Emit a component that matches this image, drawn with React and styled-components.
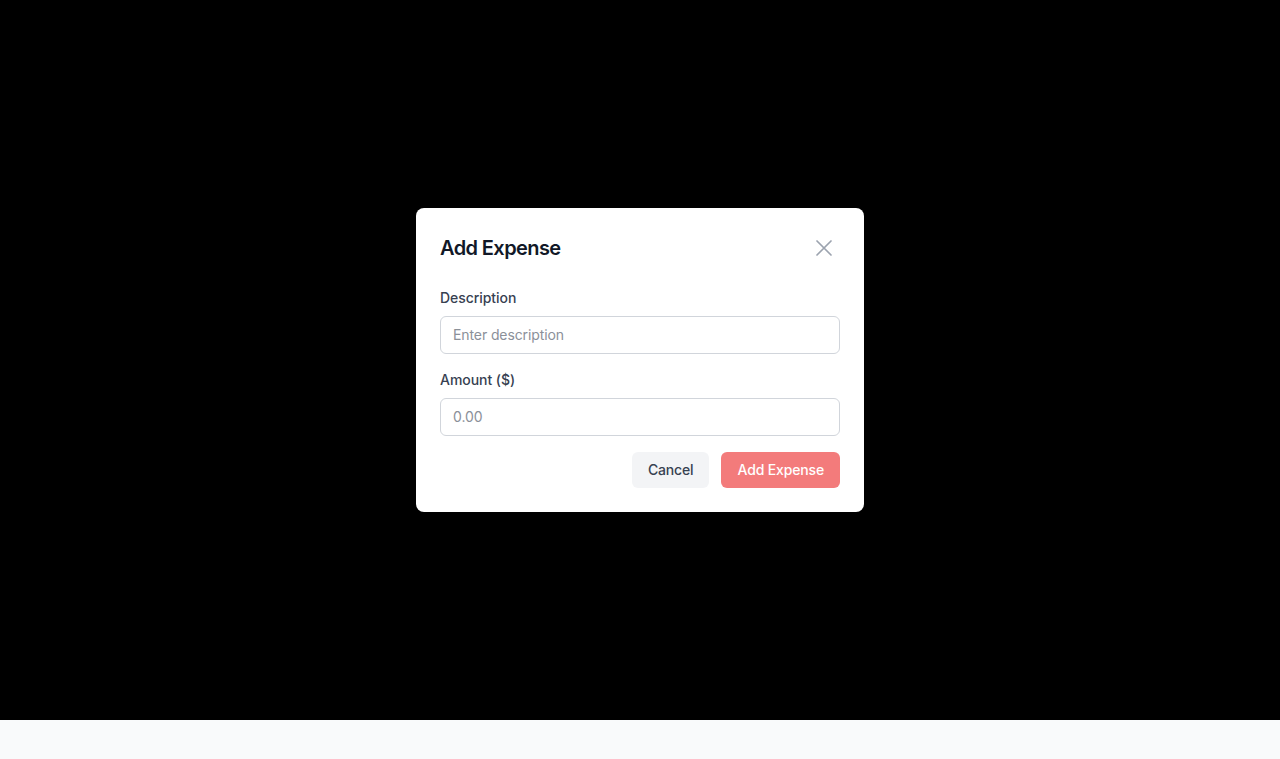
import React from 'react'
import styled, { createGlobalStyle } from 'styled-components'

const GlobalStyle = createGlobalStyle`
  html, body {
    margin: 0;
    padding: 0;
    background: #f9fafb;
    font-family: Inter, "Noto Sans", sans-serif;
    -webkit-font-smoothing: antialiased;
  }
  * { box-sizing: border-box; }
`

const Page = styled.div`
  height: 759px;
  display: flex;
  flex-direction: column;
`

const Backdrop = styled.div`
  height: 720px;
  background: #000;
  display: flex;
  align-items: center;
  justify-content: center;
`

const Dialog = styled.div`
  width: 448px;
  background: #fff;
  border-radius: 8px;
  padding: 24px;
`

const Header = styled.div`
  display: flex;
  align-items: center;
  justify-content: space-between;
  height: 32px;
  margin-bottom: 24px;
`

const Title = styled.h2`
  margin: 0;
  font-size: 20px;
  line-height: 28px;
  font-weight: 600;
  letter-spacing: -0.6px;
  color: #111827;
`

const CloseButton = styled.button`
  width: 32px;
  height: 32px;
  border: none;
  background: none;
  padding: 0;
  display: flex;
  align-items: center;
  justify-content: center;
  color: #9ca3af;
  cursor: pointer;
`

const Field = styled.div`
  display: flex;
  flex-direction: column;
  gap: 8px;
  margin-bottom: 16px;
`

const Label = styled.label`
  font-size: 14px;
  line-height: 20px;
  font-weight: 500;
  letter-spacing: -0.05px;
  color: #374151;
`

const Input = styled.input`
  width: 100%;
  height: 38px;
  border: 1px solid #d1d5db;
  border-radius: 6px;
  padding: 0 12px 1px;
  font-family: inherit;
  font-size: 14px;
  letter-spacing: -0.1px;
  color: #111827;
  outline: none;

  &::placeholder {
    color: #8b9099;
  }
`

const Actions = styled.div`
  display: flex;
  justify-content: flex-end;
  gap: 12px;
`

const Button = styled.button`
  height: 36px;
  padding: 0 16px 1px;
  border: none;
  border-radius: 6px;
  font-family: inherit;
  font-size: 14px;
  font-weight: 500;
  letter-spacing: -0.15px;
  background: ${p => (p.$primary ? '#ef4444' : '#f3f4f6')};
  color: ${p => (p.$primary ? '#fff' : '#374151')};
  opacity: ${p => (p.$primary ? 0.7 : 1)};
  cursor: pointer;
`

export default function App() {
  return (
    <Page>
      <GlobalStyle />
      <Backdrop>
        <Dialog>
          <Header>
            <Title>Add Expense</Title>
            <CloseButton aria-label="Close">
              <svg width="18" height="18" viewBox="0 0 18 18" fill="none" stroke="currentColor" strokeWidth="1.7" strokeLinecap="round">
                <path d="M2 2l14 14M16 2L2 16" />
              </svg>
            </CloseButton>
          </Header>
          <Field>
            <Label>Description</Label>
            <Input placeholder="Enter description" />
          </Field>
          <Field>
            <Label>Amount ($)</Label>
            <Input placeholder="0.00" />
          </Field>
          <Actions>
            <Button>Cancel</Button>
            <Button $primary>Add Expense</Button>
          </Actions>
        </Dialog>
      </Backdrop>
    </Page>
  )
}
